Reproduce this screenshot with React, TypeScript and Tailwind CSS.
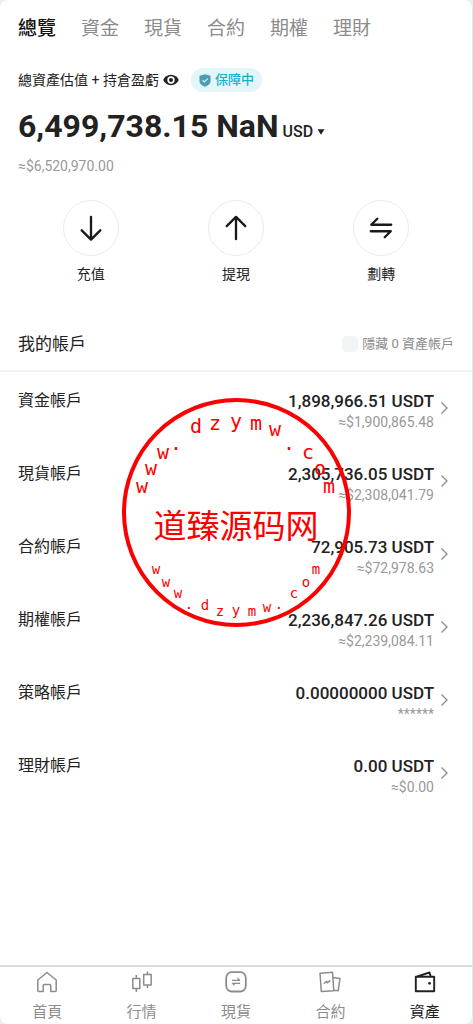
import { useState } from 'react'

const tabs = ['總覽', '資金', '現貨', '合約', '期權', '理財']

const accounts = [
  { name: '資金帳戶', amount: '1,898,966.51 USDT', usd: '≈$1,900,865.48' },
  { name: '現貨帳戶', amount: '2,305,736.05 USDT', usd: '≈$2,308,041.79' },
  { name: '合約帳戶', amount: '72,905.73 USDT', usd: '≈$72,978.63' },
  { name: '期權帳戶', amount: '2,236,847.26 USDT', usd: '≈$2,239,084.11' },
  { name: '策略帳戶', amount: '0.00000000 USDT', usd: '******' },
  { name: '理財帳戶', amount: '0.00 USDT', usd: '≈$0.00' },
]

// letter, center x, baseline y
const topLetters: [string, number, number][] = [
  ['w', 20, 95], ['w', 29, 77], ['w', 41, 61], ['.', 54, 52], ['d', 74, 35], ['z', 93, 32], ['y', 114, 30],
  ['m', 134, 32], ['w', 153, 38], ['.', 167, 52], ['c', 186, 61], ['o', 198, 77], ['m', 207, 95],
]

const bottomLetters: [string, number, number][] = [
  ['w', 34, 176], ['w', 44, 189], ['w', 56, 200], ['.', 67, 211], ['d', 83, 212], ['z', 98, 218], ['y', 114, 217],
  ['m', 130, 218], ['w', 145, 214], ['.', 157, 211], ['c', 172, 200], ['o', 184, 189], ['m', 194, 176],
]

const Stamp = () => {
  return (
    <svg viewBox="0 0 229 229" className="pointer-events-none absolute left-[122px] top-[398px] w-[229px] h-[229px] fill-[#fb0000]">
      <circle cx="114.5" cy="114.5" r="112.5" fill="none" stroke="#fb0000" strokeWidth="4" />
      <g className="font-['DejaVu_Sans_Mono',monospace] text-[20px]" textAnchor="middle">
        {topLetters.map(([c, x, y], i) => <text key={i} x={x} y={y}>{c}</text>)}
      </g>
      <g className="font-['DejaVu_Sans_Mono',monospace] text-[14px]" textAnchor="middle">
        {bottomLetters.map(([c, x, y], i) => <text key={i} x={x} y={y}>{c}</text>)}
      </g>
      <text x="114" y="140" textAnchor="middle" className="font-['Noto_Sans_CJK_SC',sans-serif] text-[33px]">道臻源码网</text>
    </svg>
  )
}

const Eye = () => (
  <svg viewBox="0 0 16 12" className="w-4 h-3">
    <path d="M8 .8C4.300.8 1.500 3 0.200 6c1.300 3 4.100 5.200 7.800 5.200S14.500 9 15.800 6C14.500 3 11.700.8 8 .8z" fill="#222" />
    <circle cx="8" cy="6" r="3.700" fill="#fff" />
    <circle cx="8" cy="6" r="2" fill="#222" />
  </svg>
)

const Shield = () => (
  <svg viewBox="0 0 12 13" className="w-3 h-[13px]">
    <path d="M6 .2 11.500 1.800v5.400c0 2.600-2.200 4.300-5.500 5.600C2.700 11.500.5 9.800.5 7.200V1.800z" fill="#4a9db3" />
    <path d="m3.500 6.200 1.900 1.800 3.300-3.400" fill="none" stroke="#d5f1f5" strokeWidth="1.200" />
  </svg>
)

const DownArrow = () => <path d="M14 2v24M4 16.500 14 26.500l10-10" />
const UpArrow = () => <path d="M14 26V2M4 12 14 2l10 10" />
const SwapArrow = () => <path d="M25 10.500H3.500L10 4M3 17.500h21.500L18 24" />

const actions = [
  { label: '充值', Icon: DownArrow },
  { label: '提現', Icon: UpArrow },
  { label: '劃轉', Icon: SwapArrow },
]

const HomeIcon = () => (
  <path d="M1.800 9 11 1.500 20.200 9v10.500a1 1 0 0 1-1 1h-4.400V15a1.500 1.500 0 0 0-1.500-1.500H8.700A1.500 1.500 0 0 0 7.200 15v5.500H2.800a1 1 0 0 1-1-1z" />
)

const CandleIcon = () => (
  <path d="M1.800 7.500h7v10h-7zM5.300 4v3.500M5.300 17.500V21M12.700 3.500h7.500V14h-7.500zM16.500.5v3M16.500 14v3" />
)

const SpotIcon = () => (
  <>
    <rect x="1.200" y="1.200" width="19.600" height="19.300" rx="5.500" strokeWidth="1.800" />
    <path d="M7 9.300h7.500L12.500 7.300M15 12.300H7.500L9.500 14.300" strokeWidth="1.300" />
  </>
)

const ContractIcon = () => (
  <>
    <path d="m1 2.300 12.500-1 1.300 18.400-12.500.8zM14 6.500l7 1-1.800 12.200-4.400-.5" />
    <path d="m4.800 12.700 2.800-2.500.7 1.700 2.900-2.500" strokeWidth="1.400" />
  </>
)

const WalletIcon = () => (
  <>
    <path d="M1.800 5.800h18.400v14.400H1.800zM1.800 5.800 15.500 1.500l1.200 4" strokeWidth="1.900" />
    <circle cx="15.500" cy="12.300" r="1.400" fill="currentColor" stroke="none" />
  </>
)

const navItems = [
  { label: '首頁', Icon: HomeIcon },
  { label: '行情', Icon: CandleIcon },
  { label: '現貨', Icon: SpotIcon },
  { label: '合約', Icon: ContractIcon },
  { label: '資產', Icon: WalletIcon },
]

export default function App() {
  const [hideZero, setHideZero] = useState(false)

  return (
    <div className="relative min-h-screen bg-[#eeeeee] font-['Roboto','Noto_Sans_CJK_TC',sans-serif] text-[#222]">
      <div className="min-h-screen flex flex-col bg-white border-r border-[#e6e6e6] rounded-lg">
        <nav className="flex gap-[25px] px-[18px] pt-3.5 text-[19px] leading-[30px] text-[#8c8c8c]">
          {tabs.map((tab, i) => (
            <button key={tab} className={i === 0 ? 'font-medium text-[#111]' : ''}>{tab}</button>
          ))}
        </nav>

        <section className="px-[18px] pt-6">
          <div className="flex items-center">
            <span className="text-sm leading-6">總資產估值 + 持倉盈虧</span>
            <button aria-label="顯示" className="ml-1"><Eye /></button>
            <span className="ml-3 flex items-center gap-1 h-6 px-2 rounded-full bg-[#e2f5f9] text-[#1ab0cb] text-[13px] font-medium">
              <Shield />
              保障中
            </span>
          </div>
          <div className="flex items-baseline mt-3.5">
            <span className="text-[32px] leading-10 font-bold">6,499,738.15 NaN</span>
            <button className="flex items-center gap-1 ml-1 text-base leading-5 font-medium">
              USD
              <svg viewBox="0 0 8 6" className="w-2 h-1.5"><path d="M.5.3h7L4 5.700z" fill="#222" /></svg>
            </button>
          </div>
          <p className="mt-2.5 text-sm leading-5 text-[#999]">≈$6,520,970.00</p>
        </section>

        <section className="grid grid-cols-3 px-[18px] pt-6">
          {actions.map(({ label, Icon }) => (
            <button key={label} className="flex flex-col items-center gap-2 text-sm leading-5">
              <span className="flex items-center justify-center w-14 h-14 rounded-full border border-[#ebebeb]">
                <svg viewBox="0 0 28 28" className="w-[26px] h-[26px] fill-none stroke-[#1a1a1a]" strokeWidth="2.500" strokeLinecap="round" strokeLinejoin="round">
                  <Icon />
                </svg>
              </span>
              {label}
            </button>
          ))}
        </section>

        <div className="flex items-center justify-between mt-11 pt-1 pb-3.5 px-[18px] border-b-2 border-[#f2f2f2]">
          <h2 className="text-[17px] leading-6">我的帳戶</h2>
          <label className="flex items-center gap-1 text-[13px] leading-5 text-[#8c8c8c]">
            <input
              type="checkbox"
              checked={hideZero}
              onChange={() => setHideZero(!hideZero)}
              className="appearance-none w-4 h-4 rounded-sm bg-[#f3f4f6] checked:bg-[#1ab0cb]"
            />
            隱藏 0 資產帳戶
          </label>
        </div>

        <main className="flex-1 px-[18px] pt-[17px]">
          {accounts.map((item) => (
            <a key={item.name} href="#" className="flex items-start pb-[30px]">
              <span className="text-base leading-6">{item.name}</span>
              <span className="ml-auto text-right">
                <span className="block text-[17px] leading-6 font-medium">{item.amount}</span>
                <span className="block text-sm leading-[19px] text-[#999]">{item.usd}</span>
              </span>
              <svg viewBox="0 0 8 14" className="w-2 h-3.5 mt-3 mx-1.5 fill-none stroke-[#8c8c8c]" strokeWidth="1.300">
                <path d="m1.500 1.500 5.500 5.500-5.500 5.500" />
              </svg>
            </a>
          ))}
        </main>

        <nav className="grid grid-cols-5 border-t-2 border-[#dcdcdc] pt-1 pb-px">
          {navItems.map(({ label, Icon }, i) => (
            <button
              key={label}
              className={`flex flex-col items-center gap-2 text-[15px] leading-[22px] ${i === 4 ? 'text-[#222]' : 'text-[#8c8c8c]'}`}
            >
              <svg viewBox="0 0 22 22" className="w-[22px] h-[22px] fill-none stroke-current" strokeWidth="1.500" strokeLinejoin="round">
                <Icon />
              </svg>
              {label}
            </button>
          ))}
        </nav>
      </div>
      <Stamp />
    </div>
  )
}
